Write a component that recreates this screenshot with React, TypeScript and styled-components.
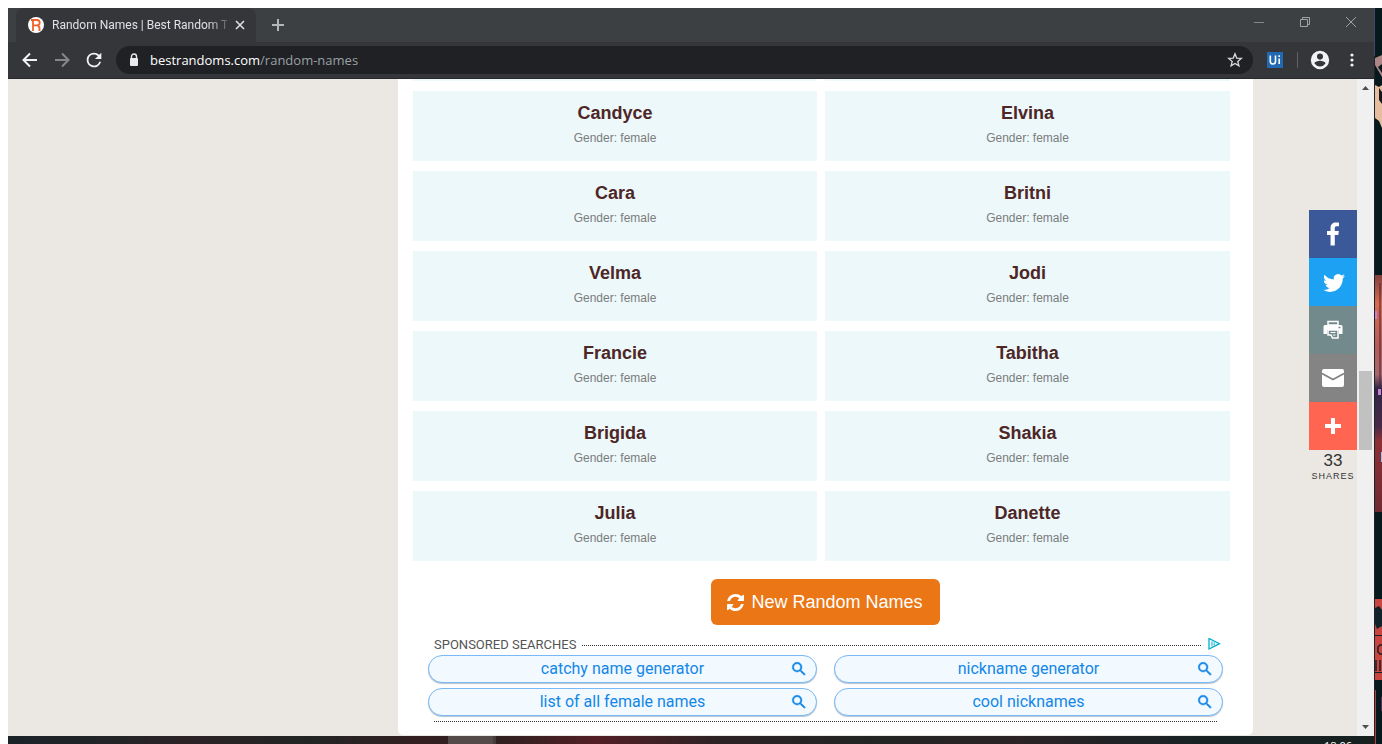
import React from "react";
import styled, { createGlobalStyle } from "styled-components";

const GlobalStyle = createGlobalStyle`
  *, *::before, *::after { box-sizing: border-box; }
  body { margin: 0; background: #fff; font-family: "Liberation Sans", Arial, sans-serif; }
  button, input { font: inherit; }
  button { border: 0; padding: 0; margin: 0; background: none; color: inherit; }
  a { text-decoration: none; color: inherit; }
  svg { display: block; flex: none; }
`;

const Desktop = styled.div`
  display: flex;
  height: 100vh;
  padding: 8px 0 0 8px;
  overflow: hidden;
`;

const Screen = styled.div`
  flex: 1;
  min-width: 0;
  display: flex;
  flex-direction: column;
`;

const Wallpaper = styled.svg`
  width: 8px;
  height: 100%;
`;

const Browser = styled.div`
  flex: 1;
  min-height: 0;
  display: flex;
  flex-direction: column;
`;

const TabStrip = styled.header`
  display: flex;
  align-items: stretch;
  height: 34px;
  padding-left: 8px;
  background: #3c4043;
  color: #dee1e6;
`;

const Tab = styled.div`
  display: flex;
  align-items: center;
  width: 240px;
  padding: 0 11px 0 12px;
  border-radius: 8px 8px 0 0;
  background: #35363a;
`;

const TabTitle = styled.span`
  flex: 1;
  margin: 0 8px;
  overflow: hidden;
  white-space: nowrap;
  font: 12px/16px Roboto, sans-serif;
  mask-image: linear-gradient(to right, #000 155px, transparent 182px);
`;

const IconButton = styled.button<{ $width: number; $color?: string }>`
  display: flex;
  align-items: center;
  justify-content: center;
  width: ${(p) => p.$width}px;
  color: ${(p) => p.$color ?? "#f1f3f4"};
`;

const WindowControls = styled.div`
  display: flex;
  margin-left: auto;
  padding-bottom: 6px;
`;

const Toolbar = styled.nav`
  display: flex;
  align-items: center;
  height: 37px;
  padding: 0 4px 1px 6px;
  border-bottom: 1px solid #27282b;
  background: #35363a;
`;

const AddressBar = styled.div`
  flex: 1;
  display: flex;
  align-items: center;
  height: 28px;
  margin: 0 8px 0 6px;
  padding: 0 10px 0 12px;
  border-radius: 14px;
  background: #202124;
`;

const Address = styled.a`
  flex: 1;
  margin-left: 10px;
  font: 13px/20px "Open Sans", sans-serif;
  color: #9aa0a6;
`;

const Domain = styled.span`
  color: #fff;
`;

const Divider = styled.span`
  width: 1px;
  height: 16px;
  margin: 0 8px;
  background: #5f6368;
`;

const Viewport = styled.div`
  flex: 1;
  min-height: 0;
  display: flex;
`;

const Page = styled.div`
  position: relative;
  flex: 1;
  min-width: 0;
  display: grid;
  grid-template-columns: 390fr 855fr 104fr;
  align-items: start;
  overflow: hidden;
  background: #ebe8e3;
`;

const Main = styled.main`
  grid-column: 2;
  padding-bottom: 13px;
  border-radius: 0 0 5px 5px;
  background: #fff;
`;

const NameGrid = styled.ul`
  display: grid;
  grid-template-columns: 404fr 405fr;
  gap: 10px 8px;
  margin: 0;
  padding: 0 23px 0 15px;
  list-style: none;
`;

const CardEdge = styled.li`
  height: 2px;
  background: #ecf8fa;
`;

const NameCard = styled.li`
  height: 70px;
  padding-top: 10px;
  text-align: center;
  background: #ecf8fa;
`;

const Name = styled.h2`
  margin: 0;
  font-size: 18px;
  line-height: 24px;
  font-weight: bold;
  color: #4d2626;
`;

const Gender = styled.p`
  margin: 4px 0 0;
  font-size: 12px;
  line-height: 18px;
  color: #7c7c7c;
`;

const GenerateButton = styled.button`
  display: flex;
  align-items: center;
  gap: 7px;
  height: 46px;
  margin: 18px auto 11px;
  padding: 0 17px 0 16px;
  border-radius: 6px;
  font-size: 18px;
  color: #fff;
  background: #eb7616;
`;

const Sponsored = styled.section`
  margin: 0 30px;
  font-family: Roboto, sans-serif;
`;

const SponsoredHeader = styled.div`
  display: flex;
  align-items: center;
  height: 18px;
  margin-bottom: 1px;
  padding: 0 2px 0 6px;
`;

const SponsoredTitle = styled.h3`
  margin: 0 6px 0 0;
  font-size: 13px;
  line-height: 16px;
  font-weight: 400;
  color: #555;
`;

const Dots = styled.span`
  flex: 1;
  margin: 1px 6px 0 0;
  border-top: 1px dotted #333;
`;

const SearchGrid = styled.div`
  display: grid;
  grid-template-columns: 1fr 1fr;
  gap: 5px 17px;
  margin-bottom: 5px;
`;

const SearchLink = styled.a`
  display: flex;
  align-items: center;
  height: 28px;
  padding: 0 8px 0 0;
  border: 1px solid #79b9f5;
  border-radius: 14px;
  box-shadow: 0 1px 1px #b9c4ce;
  background: #f2f9ff;
  font-size: 16px;
  line-height: 20px;
  color: #1287e8;
`;

const SearchText = styled.span`
  flex: 1;
  padding-left: 26px;
  text-align: center;
`;

const BottomDots = styled.div`
  margin: 0 6px;
  border-top: 1px dotted #333;
`;

const ShareBar = styled.aside`
  position: absolute;
  top: 131px;
  right: 0;
  width: 48px;
  text-align: center;
  color: #333;
`;

const ShareButton = styled.button<{ $color: string }>`
  display: flex;
  align-items: center;
  justify-content: center;
  width: 48px;
  height: 48px;
  color: #fff;
  background: ${(p) => p.$color};
`;

const ShareCount = styled.div`
  padding-top: 1px;
  font-size: 17px;
  line-height: 20px;
`;

const ShareLabel = styled.div`
  font-size: 9px;
  line-height: 10px;
  letter-spacing: 1px;
`;

const Scrollbar = styled.div`
  display: flex;
  flex-direction: column;
  align-items: center;
  width: 17px;
  padding: 7px 2px;
  background: #f0f0f0;
`;

const Track = styled.div`
  flex: 1;
  display: grid;
  grid-template-rows: 281fr 79fr 275fr;
  width: 13px;
`;

const Thumb = styled.div`
  grid-row: 2;
  background: #c1c1c1;
`;

const Taskbar = styled.footer`
  display: flex;
  justify-content: flex-end;
  height: 8px;
  padding: 3px 22px 0 0;
  overflow: hidden;
  font: 11px/14px "Open Sans", sans-serif;
  color: #fff;
  background:
    linear-gradient(#554a4a, #554a4a) 440px 0 / 45px 8px no-repeat,
    linear-gradient(#463b3d, #463b3d) 485px 0 / 3px 8px no-repeat,
    linear-gradient(to right, #1a2328 0, #232426 8%, #2b2226 13%, #222424 22%, #331f22 30%, #30201f 36%, #521f25 43%, #2c2225 52%, #222424 63%, #2b2326 74%, #172225 88%, #16201f 100%);
`;

const names: [string, string][] = [
  ["Candyce", "Elvina"],
  ["Cara", "Britni"],
  ["Velma", "Jodi"],
  ["Francie", "Tabitha"],
  ["Brigida", "Shakia"],
  ["Julia", "Danette"],
];

const searches = [
  "catchy name generator",
  "nickname generator",
  "list of all female names",
  "cool nicknames",
];

const Favicon = () => (
  <svg width="16" height="16" viewBox="0 0 16 16">
    <circle cx="8" cy="8" r="8" fill="#fff" />
    <path d="M5 14V3M3 3h6q2.700 0 2.700 2.700T9 8.400H5M8.500 8.400q3 .2 3 3V14" fill="none" stroke="#f0622a" strokeWidth="1.800" />
  </svg>
);

const Stroke = ({ d, size = 16, width = 2 }: { d: string; size?: number; width?: number }) => (
  <svg width={size} height={size} viewBox={`0 0 ${size} ${size}`} fill="none" stroke="currentColor" strokeWidth={width}>
    <path d={d} />
  </svg>
);

const Fill = ({ d, size, box = 24 }: { d: string; size: number; box?: number }) => (
  <svg width={size} height={size} viewBox={`0 0 ${box} ${box}`} fill="currentColor">
    <path d={d} />
  </svg>
);

const RefreshIcon = () => (
  <svg width="17" height="17" viewBox="0 0 1536 1536" fill="currentColor">
    <path d="M1511 928q0 5-1 7-64 268-268 434.500T764 1536q-146 0-282.500-55T238 1324l-129 129q-19 19-45 19t-45-19-19-45V960q0-26 19-45t45-19h448q26 0 45 19t19 45-19 45l-137 137q71 66 161 102t187 36q134 0 250-65t186-179q11-17 53-117 8-23 30-23h192q13 0 22.500 9.500t9.500 22.500zm25-800v448q0 26-19 45t-45 19h-448q-26 0-45-19t-19-45 19-45l138-138Q969 256 768 256q-134 0-250 65T332 500q-11 17-53 117-8 23-30 23H50q-13 0-22.500-9.500T18 608v-7q65-268 270-434.500T768 0q146 0 284 55.500T1297 212l130-129q19-19 45-19t45 19 19 45z" />
  </svg>
);

const SearchIcon = () => (
  <svg width="18" height="18" viewBox="0 0 24 24" fill="currentColor" stroke="currentColor" strokeWidth=".6">
    <path d="M15.500 14h-.79l-.28-.27A6.470 6.470 0 0 0 16 9.500 6.500 6.500 0 1 0 9.500 16c1.610 0 3.090-.59 4.230-1.570l.27.28v.79l5 4.990L20.490 19l-4.990-5zm-6 0C7.010 14 5 11.990 5 9.500S7.010 5 9.500 5 14 7.010 14 9.500 11.990 14 9.500 14z" />
  </svg>
);

const PrinterIcon = () => (
  <svg width="20" height="20" viewBox="0 0 20 20" fill="none">
    <path d="M5 1.500h10V5H5z" stroke="#fff" strokeWidth="1.500" />
    <path d="M2 5h16a1.500 1.500 0 0 1 1.500 1.500V14H16v-4H4v4H.5V6.500A1.500 1.500 0 0 1 2 5z" fill="#fff" />
    <path d="M5 10h10v8H9.500L8 15H5z" stroke="#fff" strokeWidth="1.500" />
    <path d="M7.500 12.500H12.500M10 15h2.500" stroke="#fff" />
    <path d="M15.500 7.500h2" stroke="#738a8d" strokeWidth="1.500" />
  </svg>
);

const MailIcon = () => (
  <svg width="24" height="20" viewBox="0 0 24 20">
    <rect x="1" y="1" width="22" height="18" rx="2" fill="#fff" />
    <path d="M1 5.500l11 6 11-6" fill="none" stroke="#848484" strokeWidth="1.800" />
  </svg>
);

const WallpaperArt = () => (
  <Wallpaper viewBox="0 0 8 736" preserveAspectRatio="none" aria-hidden="true">
    <defs>
      <linearGradient id="poster" x1="0" y1="0" x2="0" y2="1">
        <stop offset="0" stopColor="#823f3c" />
        <stop offset=".12" stopColor="#d96b50" />
        <stop offset=".3" stopColor="#b85b57" />
        <stop offset=".42" stopColor="#a9666a" />
        <stop offset=".48" stopColor="#302346" />
        <stop offset=".64" stopColor="#482a47" />
        <stop offset=".7" stopColor="#8d3035" />
        <stop offset="1" stopColor="#702a32" />
      </linearGradient>
    </defs>
    <rect width="8" height="736" fill="#06191d" />
    <path d="M1 50l7-3v9l-4 3 4 6v4l-7-12z" fill="#ad8587" />
    <path d="M1 77l4 2 3-2v43l-3-7-4-3z" fill="#e6bd9f" />
    <path d="M5 80l3 4v12l-3-4z" fill="#141920" />
    <path d="M1 267h7v237H1z" fill="url(#poster)" />
    <path d="M6 275v105" stroke="#41263e" />
    <path d="M1 303h2v8H1zM4 381h3v6H4z" fill="#c77fd0" />
    <path d="M7 444h1v10H7z" fill="#8ec6ff" />
    <path d="M1 591h7v81H1z" fill="#c84540" />
    <path d="M1 600l4-2 3 4v16l-5 3-2-5zM1 627h7v1H1zM1 664h7v1H1z" fill="#10232a" />
    <path d="M8 637H6l-2 2v5l2 2h2M2 652v11M6 652v11" fill="none" stroke="#172027" strokeWidth="1.500" />
    <path d="M1 682h1v54H1z" fill="#b83e39" />
    <path d="M7 689h1v14H7z" fill="#59325b" />
    <path d="M0 0h1v48H0z" fill="#45456e" />
    <path d="M0 48h1v688H0z" fill="#1d2326" />
  </Wallpaper>
);

export default function App() {
  return (
    <>
      <GlobalStyle />
      <Desktop>
        <Screen>
          <Browser>
            <TabStrip>
              <Tab>
                <Favicon />
                <TabTitle>Random Names | Best Random To</TabTitle>
                <IconButton $width={10} $color="#dadce0" aria-label="Close tab">
                  <Stroke size={10} d="M1 1l8 8M9 1l-8 8" width={1.7} />
                </IconButton>
              </Tab>
              <IconButton $width={44} $color="#b4b7ba" aria-label="New tab">
                <Stroke size={12} d="M6 0v12M0 6h12" width={2} />
              </IconButton>
              <WindowControls>
                <IconButton $width={46} $color="#85888a" aria-label="Minimize">
                  <Stroke size={10} d="M0 5.500h10" width={1} />
                </IconButton>
                <IconButton $width={46} $color="#a0a2a4" aria-label="Restore">
                  <Stroke size={10} d="M.5 2.500h7v7h-7zM2.500 2.500v-2h7v7h-2" width={1} />
                </IconButton>
                <IconButton $width={46} $color="#a0a2a4" aria-label="Close window">
                  <Stroke size={10} d="M0 0l10 10M10 0L0 10" width={1} />
                </IconButton>
              </WindowControls>
            </TabStrip>
            <Toolbar>
              <IconButton $width={32} aria-label="Back">
                <Stroke d="M15 8H2M8 1.500L1.500 8 8 14.500" />
              </IconButton>
              <IconButton $width={32} $color="#85878a" aria-label="Forward">
                <Stroke d="M1 8h13M8 1.500L14.500 8 8 14.500" />
              </IconButton>
              <IconButton $width={32} aria-label="Reload">
                <Fill
                  size={22}
                  d="M17.650 6.350A7.960 7.960 0 0 0 12 4a8 8 0 1 0 7.730 10h-2.080A6 6 0 1 1 12 6c1.660 0 3.140.69 4.220 1.780L13 11h7V4z"
                />
              </IconButton>
              <AddressBar>
                <svg width="12" height="14" viewBox="0 0 12 14">
                  <path d="M3.500 6V3.500a2.500 2.500 0 0 1 5 0V6" fill="none" stroke="#e8eaed" strokeWidth="1.400" />
                  <rect x="2" y="5" width="8" height="8" rx="1" fill="#e8eaed" />
                </svg>
                <Address href="#names">
                  <Domain>bestrandoms.com</Domain>/random-names
                </Address>
                <IconButton $width={16} $color="#dadce0" aria-label="Bookmark this page">
                  <Stroke d="M8 1.800l1.700 4.300 4.600.3-3.500 3 1.100 4.500L8 11.400l-3.900 2.500 1.100-4.500-3.500-3 4.600-.3z" width={1.3} />
                </IconButton>
              </AddressBar>
              <IconButton $width={28} aria-label="Extension">
                <svg width="16" height="16" viewBox="0 0 16 16" fill="none" stroke="#fff" strokeWidth="1.600">
                  <rect width="16" height="16" fill="#2169b3" stroke="none" />
                  <path d="M3.300 3.500v5.800q0 2.700 2.600 2.700t2.600-2.700V3.500M12.200 6.500V12M12.200 3.300V5" />
                </svg>
              </IconButton>
              <Divider />
              <IconButton $width={28} aria-label="Profile">
                <Fill
                  size={22}
                  d="M12 2a10 10 0 1 0 0 20 10 10 0 0 0 0-20zm0 3a3.300 3.300 0 1 1 0 6.600A3.300 3.300 0 0 1 12 5zm0 14a7 7 0 0 1-6-3.200c0-2 4-3 6-3s6 1 6 3A7 7 0 0 1 12 19z"
                />
              </IconButton>
              <IconButton $width={36} aria-label="Menu">
                <svg width="4" height="14" viewBox="0 0 4 14" fill="currentColor">
                  <circle cx="2" cy="2" r="1.600" />
                  <circle cx="2" cy="7" r="1.600" />
                  <circle cx="2" cy="12" r="1.600" />
                </svg>
              </IconButton>
            </Toolbar>
            <Viewport>
              <Page>
                <Main id="names">
                  <NameGrid>
                    <CardEdge />
                    <CardEdge />
                    {names.flat().map((name) => (
                      <NameCard key={name}>
                        <Name>{name}</Name>
                        <Gender>Gender: female</Gender>
                      </NameCard>
                    ))}
                  </NameGrid>
                  <GenerateButton>
                    <RefreshIcon />
                    New Random Names
                  </GenerateButton>
                  <Sponsored>
                    <SponsoredHeader>
                      <SponsoredTitle>SPONSORED SEARCHES</SponsoredTitle>
                      <Dots />
                      <svg width="14" height="14" viewBox="0 0 14 14" fill="none" stroke="#00aecd">
                        <path d="M2 .5v10.500L12.500 5.700z" strokeWidth="1.300" />
                        <path d="M5 3.300v5M7.200 4.300v3" />
                      </svg>
                    </SponsoredHeader>
                    <SearchGrid>
                      {searches.map((text) => (
                        <SearchLink key={text} href="#search">
                          <SearchText>{text}</SearchText>
                          <SearchIcon />
                        </SearchLink>
                      ))}
                    </SearchGrid>
                    <BottomDots />
                  </Sponsored>
                </Main>
                <ShareBar>
                  <ShareButton $color="#3b5998" aria-label="Facebook">
                    <Fill size={32} box={32} d="M17.780 27.500V17.008h3.522l.527-4.090h-4.050v-2.610c0-1.182.33-1.990 2.023-1.990h2.166V4.660c-.375-.05-1.660-.16-3.155-.16-3.123 0-5.260 1.905-5.260 5.405v3.016h-3.530v4.090h3.530V27.500h4.223z" />
                  </ShareButton>
                  <ShareButton $color="#1da1f2" aria-label="Twitter">
                    <Fill size={32} box={32} d="M27.996 10.116c-.81.360-1.680.602-2.592.710a4.526 4.526 0 0 0 1.984-2.496 9.037 9.037 0 0 1-2.866 1.095 4.513 4.513 0 0 0-7.690 4.116 12.810 12.810 0 0 1-9.300-4.715 4.490 4.490 0 0 0-.612 2.270 4.510 4.510 0 0 0 2.008 3.755 4.495 4.495 0 0 1-2.044-.564v.057a4.515 4.515 0 0 0 3.620 4.425 4.520 4.520 0 0 1-2.038.077 4.517 4.517 0 0 0 4.217 3.134 9.055 9.055 0 0 1-5.604 1.930A9.180 9.180 0 0 1 6 23.850a12.773 12.773 0 0 0 6.918 2.027c8.300 0 12.840-6.876 12.840-12.840 0-.195-.005-.390-.014-.583a9.172 9.172 0 0 0 2.252-2.336z" />
                  </ShareButton>
                  <ShareButton $color="#738a8d" aria-label="Print">
                    <PrinterIcon />
                  </ShareButton>
                  <ShareButton $color="#848484" aria-label="Email">
                    <MailIcon />
                  </ShareButton>
                  <ShareButton $color="#ff6550" aria-label="More">
                    <Stroke d="M8 0v16M0 8h16" width={4} />
                  </ShareButton>
                  <ShareCount>33</ShareCount>
                  <ShareLabel>SHARES</ShareLabel>
                </ShareBar>
              </Page>
              <Scrollbar>
                <svg width="7" height="4" viewBox="0 0 7 4" fill="#505050">
                  <path d="M0 4L3.500 0 7 4z" />
                </svg>
                <Track>
                  <Thumb />
                </Track>
                <svg width="7" height="4" viewBox="0 0 7 4" fill="#505050">
                  <path d="M0 0l3.500 4L7 0z" />
                </svg>
              </Scrollbar>
            </Viewport>
          </Browser>
          <Taskbar>18:06</Taskbar>
        </Screen>
        <WallpaperArt />
      </Desktop>
    </>
  );
}
